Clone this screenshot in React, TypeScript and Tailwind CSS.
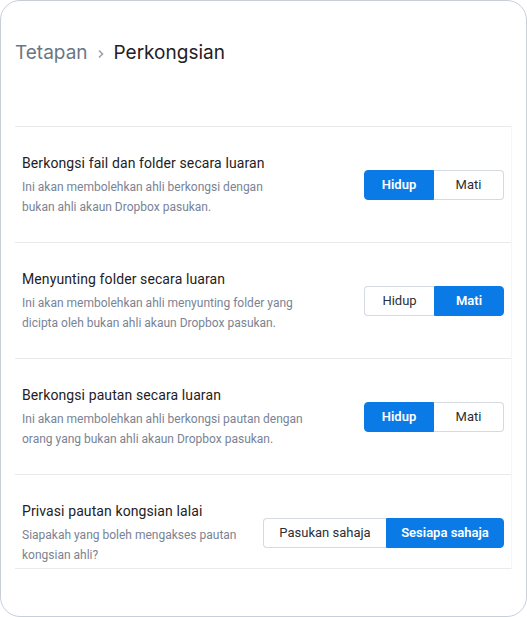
import { ReactNode } from 'react'

type Opt = { label: string; on: boolean; w: string }

function Toggle({ opts }: { opts: Opt[] }) {
  return (
    <div className="flex shrink-0">
      {opts.map((o, i) => (
        <div
          key={o.label}
          className={
            'h-[30px] flex items-center justify-center text-[13px] ' +
            o.w +
            ' ' +
            (o.on
              ? 'bg-[#0a7be6] text-white font-semibold border border-[#0a7be6]'
              : 'bg-white text-[#2a2f36] border border-[#d5d9e0]') +
            (i === 0 ? ' rounded-l-[4px]' : ' rounded-r-[4px]') +
            (i === 0 && !o.on ? ' border-r-0' : '') +
            (i === 1 && !o.on ? ' border-l-0' : '')
          }
        >
          {o.label}
        </div>
      ))}
    </div>
  )
}

function Row({ title, desc, opts, last }: { title: string; desc: ReactNode; opts: Opt[]; last?: boolean }) {
  return (
    <div
      className={
        'flex items-center justify-between border-t border-[#e8eaee] pl-[7px] pr-[7px] ' +
        (last ? 'pt-[26px] pb-[3px] border-b' : 'pt-[26px] pb-[25px]')
      }
      style={{ fontFamily: 'Roboto, "Noto Sans", sans-serif' }}
    >
      <div>
        <div className="text-[14px] leading-[20px] text-[#1e2126] tracking-[0.1px]">{title}</div>
        <div className="text-[12px] leading-[20px] text-[#7a8394] mt-[4px]">{desc}</div>
      </div>
      <Toggle opts={opts} />
    </div>
  )
}

export default function App() {
  const onOff = (on: boolean): Opt[] => [
    { label: 'Hidup', on, w: 'w-[70px]' },
    { label: 'Mati', on: !on, w: 'w-[70px]' },
  ]
  return (
    <div className="w-[527px] h-[617px] bg-white">
      <div
        className="w-[527px] h-[617px] border border-[#c9ced9] rounded-[20px] px-[14px]"
        style={{ fontFamily: 'Inter, "Noto Sans", sans-serif' }}
      >
        <div className="pt-[38px] h-[125px]">
          <div className="flex items-center text-[19px] leading-[28px]">
            <span className="text-[#6b7684]">Tetapan</span>
            <svg width="12" height="12" viewBox="0 0 12 12" className="ml-[7px] mr-[7px] mt-[1px]">
              <path d="M4 2.5 L7.5 6 L4 9.5" fill="none" stroke="#9aa1ab" strokeWidth="1.6" />
            </svg>
            <span className="text-[#1e2126]">Perkongsian</span>
          </div>
        </div>
        <div className="border-r border-[#f4f5f7]">
          <Row
            title="Berkongsi fail dan folder secara luaran"
            desc={<>Ini akan membolehkan ahli berkongsi dengan<br />bukan ahli akaun Dropbox pasukan.</>}
            opts={onOff(true)}
          />
          <Row
            title="Menyunting folder secara luaran"
            desc={<>Ini akan membolehkan ahli menyunting folder yang<br />dicipta oleh bukan ahli akaun Dropbox pasukan.</>}
            opts={onOff(false)}
          />
          <Row
            title="Berkongsi pautan secara luaran"
            desc={<>Ini akan membolehkan ahli berkongsi pautan dengan<br />orang yang bukan ahli akaun Dropbox pasukan.</>}
            opts={onOff(true)}
          />
          <Row
            last
            title="Privasi pautan kongsian lalai"
            desc={<>Siapakah yang boleh mengakses pautan<br />kongsian ahli?</>}
            opts={[
              { label: 'Pasukan sahaja', on: false, w: 'w-[123px]' },
              { label: 'Sesiapa sahaja', on: true, w: 'w-[118px]' },
            ]}
          />
        </div>
      </div>
    </div>
  )
}
